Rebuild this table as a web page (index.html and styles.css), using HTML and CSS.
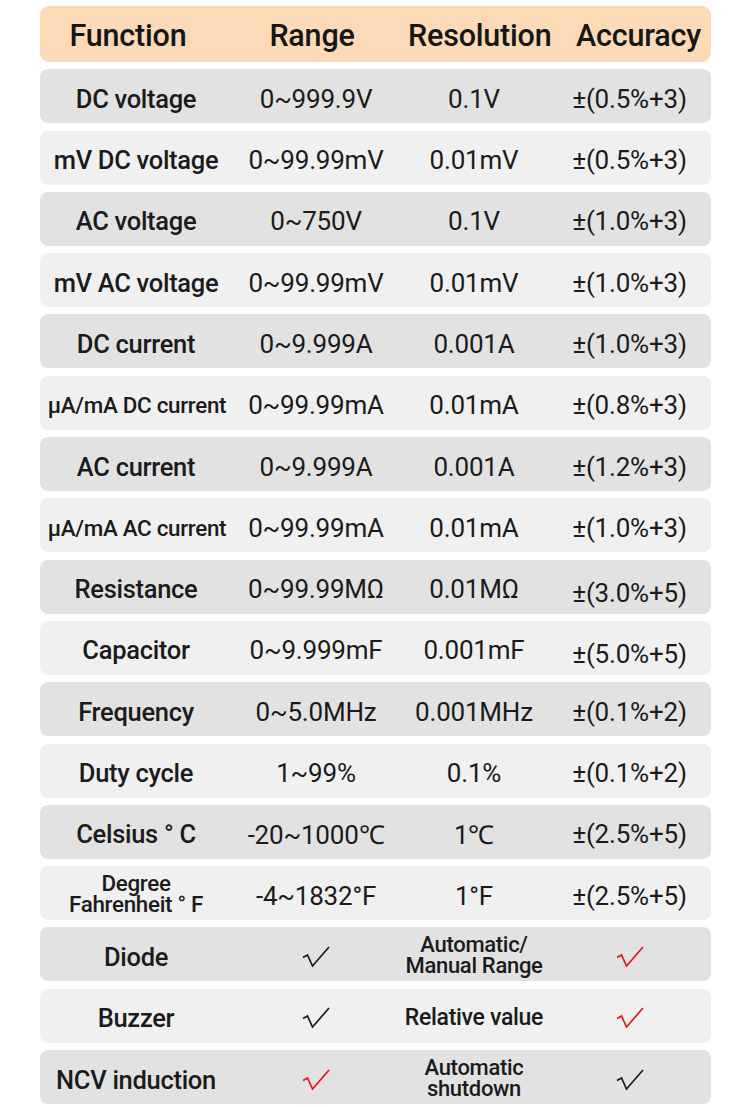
FILE: index.html
```html
<!DOCTYPE html>
<html>
<head>
<meta charset="utf-8">
<link rel="stylesheet" href="styles.css">
</head>
<body>
<div class="table">
  <div class="head">
    <div class="hc">Function</div>
    <div class="hc">Range</div>
    <div class="hc">Resolution</div>
    <div class="hc hc-acc">Accuracy</div>
  </div>

  <div class="row dark"><div class="fn">DC voltage</div><div class="v">0~999.9V</div><div class="v">0.1V</div><div class="v">±(0.5%+3)</div></div>
  <div class="row light"><div class="fn">mV DC voltage</div><div class="v">0~99.99mV</div><div class="v">0.01mV</div><div class="v">±(0.5%+3)</div></div>
  <div class="row dark"><div class="fn">AC voltage</div><div class="v">0~750V</div><div class="v">0.1V</div><div class="v">±(1.0%+3)</div></div>
  <div class="row light"><div class="fn">mV AC voltage</div><div class="v">0~99.99mV</div><div class="v">0.01mV</div><div class="v">±(1.0%+3)</div></div>
  <div class="row dark"><div class="fn">DC current</div><div class="v">0~9.999A</div><div class="v">0.001A</div><div class="v">±(1.0%+3)</div></div>
  <div class="row light"><div class="fn small">µA/mA DC current</div><div class="v">0~99.99mA</div><div class="v">0.01mA</div><div class="v">±(0.8%+3)</div></div>
  <div class="row dark"><div class="fn">AC current</div><div class="v">0~9.999A</div><div class="v">0.001A</div><div class="v">±(1.2%+3)</div></div>
  <div class="row light"><div class="fn small">µA/mA AC current</div><div class="v">0~99.99mA</div><div class="v">0.01mA</div><div class="v">±(1.0%+3)</div></div>
  <div class="row dark"><div class="fn">Resistance</div><div class="v">0~99.99MΩ</div><div class="v">0.01MΩ</div><div class="v low">±(3.0%+5)</div></div>
  <div class="row light"><div class="fn">Capacitor</div><div class="v">0~9.999mF</div><div class="v">0.001mF</div><div class="v low">±(5.0%+5)</div></div>
  <div class="row dark"><div class="fn">Frequency</div><div class="v">0~5.0MHz</div><div class="v">0.001MHz</div><div class="v">±(0.1%+2)</div></div>
  <div class="row light"><div class="fn">Duty cycle</div><div class="v">1~99%</div><div class="v">0.1%</div><div class="v">±(0.1%+2)</div></div>
  <div class="row dark"><div class="fn">Celsius ° C</div><div class="v">-20~1000℃</div><div class="v">1℃</div><div class="v">±(2.5%+5)</div></div>
  <div class="row light"><div class="fn two">Degree<br>Fahrenheit ° F</div><div class="v">-4~1832°F</div><div class="v">1°F</div><div class="v">±(2.5%+5)</div></div>

  <div class="row dark">
    <div class="fn">Diode</div>
    <div class="v"><svg class="chk" viewBox="0 0 28 22"><path d="M1 11.5 L5.5 9 L10.5 20 L27 1"/></svg></div>
    <div class="v lbl two">Automatic/<br>Manual Range</div>
    <div class="v"><svg class="chk red" viewBox="0 0 28 22"><path d="M1 11.5 L5.5 9 L10.5 20 L27 1"/></svg></div>
  </div>
  <div class="row light">
    <div class="fn">Buzzer</div>
    <div class="v"><svg class="chk" viewBox="0 0 28 22"><path d="M1 11.5 L5.5 9 L10.5 20 L27 1"/></svg></div>
    <div class="v lbl">Relative value</div>
    <div class="v"><svg class="chk red" viewBox="0 0 28 22"><path d="M1 11.5 L5.5 9 L10.5 20 L27 1"/></svg></div>
  </div>
  <div class="row dark">
    <div class="fn">NCV induction</div>
    <div class="v"><svg class="chk red" viewBox="0 0 28 22"><path d="M1 11.5 L5.5 9 L10.5 20 L27 1"/></svg></div>
    <div class="v lbl two">Automatic<br>shutdown</div>
    <div class="v"><svg class="chk" viewBox="0 0 28 22"><path d="M1 11.5 L5.5 9 L10.5 20 L27 1"/></svg></div>
  </div>
</div>
</body>
</html>
```

FILE: styles.css
```css
html, body {
  margin: 0;
  padding: 0;
  background: #ffffff;
}

body {
  font-family: Roboto, "Liberation Sans", Arial, sans-serif;
  color: #1b1b1b;
  width: 750px;
  height: 1107px;
  overflow: hidden;
}

.table {
  width: 671px;
  margin: 6px 0 0 40px;
  display: flex;
  flex-direction: column;
  gap: 7.3px;
}

.head {
  height: 56px;
  box-sizing: border-box;
  padding-top: 3px;
  background: #fcdab7;
  border-radius: 9px;
  display: grid;
  grid-template-columns: 176px 192px 140px 1fr;
  align-items: center;
}

.hc {
  text-align: center;
  font-size: 30.5px;
  font-weight: 500;
  color: #161616;
  letter-spacing: -0.2px;
  white-space: nowrap;
}

.hc-acc {
  padding-left: 18px;
}

.row {
  height: 54px;
  box-sizing: border-box;
  padding-top: 5px;
  border-radius: 8px;
  display: grid;
  grid-template-columns: 192px 168px 148px 1fr;
  align-items: center;
}

.dark {
  background: #e2e2e2;
}

.light {
  background: #f0f0f0;
}

.fn {
  text-align: center;
  font-size: 25.5px;
  font-weight: 500;
  letter-spacing: -0.3px;
  white-space: nowrap;
}

.fn.small {
  font-size: 22.4px;
  padding-left: 2px;
}

.fn.two {
  font-size: 22.4px;
  line-height: 21px;
  padding-bottom: 3px;
}

.v {
  text-align: center;
  font-size: 26px;
  font-weight: 400;
  letter-spacing: -0.2px;
  white-space: nowrap;
  display: flex;
  justify-content: center;
  align-items: center;
}

.v.low {
  padding-top: 8px;
}

.lbl {
  font-size: 23px;
  font-weight: 500;
  line-height: 22px;
  letter-spacing: -0.3px;
}

.lbl.two {
  display: block;
  font-size: 22px;
  line-height: 21px;
  padding-bottom: 3px;
}

.chk {
  width: 28px;
  height: 22px;
  fill: none;
  stroke: #1a1a1a;
  stroke-width: 1.7;
  stroke-linejoin: miter;
}

.chk.red {
  stroke: #e3141b;
}
```
